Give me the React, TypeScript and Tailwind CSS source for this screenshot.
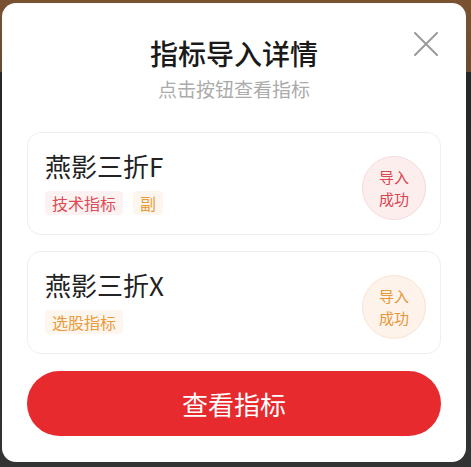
export default function App() {
  const items = [
    {
      name: "燕影三折F",
      tags: [
        { label: "技术指标", cls: "text-[#dd4b55] bg-[#fdf2f2]" },
        { label: "副", cls: "text-[#eb9a3a] bg-[#fdf6ee]" },
      ],
      badge: "text-[#d9444e] bg-[#fdeeee] border-[#f6d9dc]",
    },
    {
      name: "燕影三折X",
      tags: [{ label: "选股指标", cls: "text-[#eb9a3a] bg-[#fdf6ee]" }],
      badge: "text-[#e8963a] bg-[#fdf3ea] border-[#f8e4d2]",
    },
  ];

  return (
    <div
      className="w-[471px] h-[467px] pt-[3px] pl-[2px] bg-[linear-gradient(to_bottom,#7a5232_0,#6b4a30_72px,#262626_72px,#333_100%)]"
      style={{ fontFamily: '"Noto Sans CJK SC", "Noto Sans", sans-serif' }}
    >
      <div className="relative w-[464px] h-[459px] rounded-[14px] bg-white px-[25px] flex flex-col">
        {/* close */}
        <button className="absolute right-[28px] top-[29px] w-[24px] h-[24px] text-[#9a9a9a]">
          <svg width="24" height="24" viewBox="0 0 24 24" fill="none" stroke="currentColor" strokeWidth="2" strokeLinecap="round">
            <path d="M1 1L23 23M23 1L1 23" />
          </svg>
        </button>

        <div className="pt-[35px] text-center text-[28px] leading-[30px] font-medium text-[#1a1a1a]">指标导入详情</div>
        <div className="mt-[10px] text-center text-[19px] leading-[22px] text-[#ababab]">点击按钮查看指标</div>

        <div className="mt-[32px] flex flex-col gap-[16px]">
          {items.map((it) => (
            <div key={it.name} className="h-[103px] rounded-[14px] border border-[#efefef] pl-[17px] pr-[14px] flex items-center">
              <div className="flex-1 flex flex-col">
                <div className="text-[26px] leading-[28px] text-[#222]">{it.name}</div>
                <div className="mt-[11px] flex gap-[10px]">
                  {it.tags.map((t) => (
                    <span key={t.label} className={`px-[7px] h-[24px] flex items-center text-[16px] leading-[18px] rounded-[4px] ${t.cls}`}>
                      {t.label}
                    </span>
                  ))}
                </div>
              </div>
              <div className={`mt-[8px] w-[64px] h-[64px] rounded-full border flex flex-col items-center justify-center text-[15px] leading-[22px] ${it.badge}`}>
                <div>导入</div>
                <div>成功</div>
              </div>
            </div>
          ))}
        </div>

        <button className="mt-[17px] h-[65px] w-full rounded-full bg-[#e62a2e] text-white text-[26px] leading-[28px]">
          查看指标
        </button>
      </div>
    </div>
  );
}
